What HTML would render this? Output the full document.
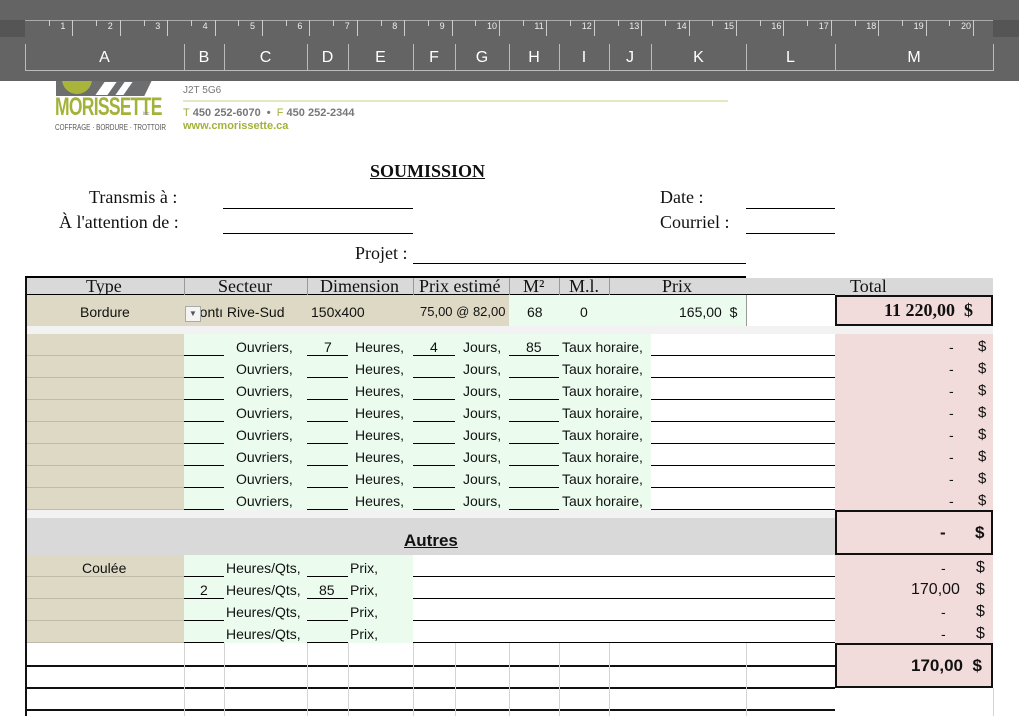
<!DOCTYPE html>
<html><head><meta charset="utf-8"><style>
*{margin:0;padding:0;box-sizing:border-box}
body{width:1019px;height:716px;overflow:hidden;background:#fff;position:relative;font-family:"Liberation Sans",sans-serif;color:#111}
.a{position:absolute}
.t{position:absolute;font-family:"Liberation Serif",serif;font-size:18px;white-space:nowrap}
.s{position:absolute;font-size:14px;white-space:nowrap;line-height:22px;padding-top:2px}
.ul{position:absolute;height:1px;background:#000}
.vl{position:absolute;width:1px;background:#d4d4d4}
</style></head><body>

<!-- logo -->
<div class="a" style="left:56px;top:80px;width:96px;height:16px;background:#6d6e70;clip-path:polygon(0 0,100% 0,92% 100%,0 100%)"></div>
<div class="a" style="left:62px;top:70px;width:30px;height:24px;border-radius:0 0 15px 15px;background:#a8b53a"></div>
<div class="a" style="left:100px;top:82px;width:12px;height:13px;background:#fff;transform:skewX(-35deg)"></div>
<div class="a" style="left:120px;top:82px;width:8px;height:13px;background:#fff;transform:skewX(-35deg)"></div>
<div class="a" style="left:55px;top:93px;font-size:25px;font-weight:bold;color:#a4b23a;letter-spacing:-1px;transform:scaleX(0.7);transform-origin:left;white-space:nowrap">MORISSETTE</div>
<div class="a" style="left:143px;top:111px;font-size:5px;color:#888">inc</div>
<div class="a" style="left:55px;top:122px;font-size:8.5px;color:#555;white-space:nowrap;transform:scaleX(0.75);transform-origin:left">COFFRAGE · BORDURE · TROTTOIR</div>
<div class="a" style="left:183px;top:85px;font-size:10px;color:#777">J2T 5G6</div>
<div class="a" style="left:183px;top:100px;width:545px;height:2px;background:#e3e8c4"></div>
<div class="a" style="left:183px;top:107px;font-size:11px;color:#777;font-weight:bold;white-space:nowrap"><span style="color:#a4b23a;font-weight:normal">T</span> 450 252-6070 &nbsp;•&nbsp; <span style="color:#a4b23a;font-weight:normal">F</span> 450 252-2344</div>
<div class="a" style="left:183px;top:120px;font-size:11px;color:#a4b23a;font-weight:bold">www.cmorissette.ca</div>

<!-- header bar -->
<div class="a" style="left:0;top:0;width:1019px;height:81px;background:#646464"></div>
<div class="a" style="left:0;top:20px;width:25px;height:17px;background:#555"></div>
<div class="a" style="left:993px;top:20px;width:26px;height:17px;background:#555"></div>
<div class="a" style="left:25px;top:20px;width:968px;height:1px;background:#aaa"></div>
<div class="a" style="left:25px;top:70px;width:968px;height:1px;background:#bbb"></div>
<div id="ruler"></div>
<div id="cols"></div>

<!-- title -->
<div class="t" style="left:370px;top:161px;font-weight:bold;text-decoration:underline;font-size:18px">SOUMISSION</div>
<div class="t" style="left:89px;top:187px">Transmis à :</div>
<div class="t" style="left:59px;top:212px">À l'attention de :</div>
<div class="t" style="left:660px;top:187px">Date :</div>
<div class="t" style="left:660px;top:212px">Courriel :</div>
<div class="t" style="left:355px;top:243px">Projet :</div>
<div class="ul" style="left:223px;top:208px;width:190px"></div>
<div class="ul" style="left:223px;top:233px;width:190px"></div>
<div class="ul" style="left:746px;top:208px;width:89px"></div>
<div class="ul" style="left:746px;top:233px;width:89px"></div>
<div class="ul" style="left:413px;top:263px;width:333px"></div>

<!-- table header -->
<div class="a" style="left:25px;top:278px;width:968px;height:17px;background:#d9d9d9"></div>
<div class="a" style="left:25px;top:276px;width:721px;height:2px;background:#000"></div>
<div class="t" style="left:86px;top:276px">Type</div>
<div class="t" style="left:218px;top:276px">Secteur</div>
<div class="t" style="left:320px;top:276px">Dimension</div>
<div class="t" style="left:419px;top:276px">Prix estimé</div>
<div class="t" style="left:523px;top:276px">M²</div>
<div class="t" style="left:569px;top:276px">M.l.</div>
<div class="t" style="left:662px;top:276px">Prix</div>
<div class="t" style="left:850px;top:276px">Total</div>
<div class="a" style="left:25px;top:294px;width:810px;height:1px;background:#000"></div>
<div class="vl" style="left:184px;top:278px;height:48px;background:#999"></div>
<div class="vl" style="left:307px;top:278px;height:48px;background:#999"></div>
<div class="vl" style="left:413px;top:278px;height:48px;background:#999"></div>
<div class="vl" style="left:509px;top:278px;height:48px;background:#999"></div>
<div class="vl" style="left:559px;top:278px;height:48px;background:#999"></div>
<div class="vl" style="left:609px;top:278px;height:48px;background:#999"></div>
<div class="vl" style="left:746px;top:295px;height:31px;background:#999"></div>

<!-- data row -->
<div class="a" style="left:25px;top:295px;width:484px;height:31px;background:#ddd9c4"></div>
<div class="a" style="left:509px;top:295px;width:237px;height:31px;background:#ebfcef"></div>
<div class="a" style="left:835px;top:295px;width:158px;height:31px;background:#f2dcdb;border:2px solid #111"></div>
<div class="s" style="left:80px;top:299px">Bordure</div>
<div class="s" style="left:188px;top:299px">Montı Rive-Sud</div>
<div class="a" style="left:185px;top:306px;width:16px;height:16px;background:#f4f4f4;border:1px solid #aaa;font-size:8px;text-align:center;line-height:14px;color:#555">▼</div>
<div class="s" style="left:311px;top:299px">150x400</div>
<div class="s" style="left:420px;top:299px;font-size:13px">75,00 @ 82,00</div>
<div class="s" style="left:527px;top:299px">68</div>
<div class="s" style="left:580px;top:299px">0</div>
<div class="s" style="left:679px;top:299px">165,00 &nbsp;$</div>
<div class="t" style="left:884px;top:300px;font-weight:bold;font-size:18px">11 220,00 &nbsp;$</div>
<div class="a" style="left:25px;top:326px;width:968px;height:8px;background:#f2f2f2"></div>

<div id="workers"></div>

<!-- Autres -->
<div class="a" style="left:25px;top:510px;width:810px;height:8px;background:#f2f2f2"></div>
<div class="a" style="left:25px;top:518px;width:810px;height:37px;background:#d9d9d9"></div>
<div class="a" style="left:835px;top:510px;width:158px;height:45px;background:#f2dcdb;border:2px solid #111"></div>
<div class="a" style="left:404px;top:531px;font-size:17px;font-weight:bold;text-decoration:underline">Autres</div>
<div class="a" style="left:940px;top:523px;font-size:17px;font-weight:bold">-</div>
<div class="a" style="left:975px;top:523px;font-size:17px;font-weight:bold">$</div>
<div id="autres"></div>

<div class="a" style="left:835px;top:643px;width:158px;height:45px;background:#f2dcdb;border:2px solid #111"></div>
<div class="a" style="left:911px;top:656px;font-size:17px;font-weight:bold">170,00 &nbsp;$</div>
<div class="a" style="left:25px;top:665px;width:810px;height:1.5px;background:#111"></div>
<div class="a" style="left:25px;top:687px;width:810px;height:1.5px;background:#111"></div>
<div class="a" style="left:25px;top:709px;width:810px;height:1.5px;background:#111"></div>
<div class="vl" style="left:184px;top:643px;height:73px"></div>
<div class="vl" style="left:224px;top:643px;height:73px"></div>
<div class="vl" style="left:307px;top:643px;height:73px"></div>
<div class="vl" style="left:348px;top:643px;height:73px"></div>
<div class="vl" style="left:413px;top:643px;height:73px"></div>
<div class="vl" style="left:455px;top:643px;height:73px"></div>
<div class="vl" style="left:509px;top:643px;height:73px"></div>
<div class="vl" style="left:559px;top:643px;height:73px"></div>
<div class="vl" style="left:609px;top:643px;height:73px"></div>
<div class="vl" style="left:746px;top:643px;height:73px"></div>
<div class="vl" style="left:993px;top:688px;height:28px"></div>
<div class="a" style="left:25px;top:278px;width:1.5px;height:438px;background:#111"></div>

<script>
var h='';
var cols=[[25,184,'A'],[184,224,'B'],[224,307,'C'],[307,348,'D'],[348,413,'E'],[413,455,'F'],[455,509,'G'],[509,559,'H'],[559,609,'I'],[609,651,'J'],[651,746,'K'],[746,835,'L'],[835,993,'M']];
cols.forEach(function(c){h+='<div class="a" style="left:'+c[0]+'px;top:44px;width:1px;height:27px;background:#bbb"></div><div class="a" style="left:'+c[0]+'px;top:49px;width:'+(c[1]-c[0])+'px;text-align:center;color:#fff;font-size:16px">'+c[2]+'</div>';});
h+='<div class="a" style="left:993px;top:44px;width:1px;height:27px;background:#bbb"></div>';
document.getElementById('cols').innerHTML=h;
h='';
for(var i=1;i<=20;i++){var x=25+i*47.4;h+='<div class="a" style="left:'+x+'px;top:20px;width:1px;height:16px;background:#ccc"></div><div class="a" style="left:'+(x-12)+'px;top:21px;color:#eee;font-size:9px">'+i+'</div>';
h+='<div class="a" style="left:'+(x-23.7)+'px;top:20px;width:1px;height:6px;background:#ccc"></div>';}
document.getElementById('ruler').innerHTML=h;
h='';
for(var r=0;r<8;r++){var y=334+r*22;
h+='<div class="a" style="left:25px;top:'+y+'px;width:159px;height:22px;background:#ddd9c4;border-bottom:1px solid #bfbba8"></div>';
h+='<div class="a" style="left:184px;top:'+y+'px;width:467px;height:22px;background:#ebfcef"></div>';
h+='<div class="a" style="left:835px;top:'+y+'px;width:158px;height:22px;background:#f2dcdb"></div>';
[[184,224],[307,348],[413,455],[509,559],[651,835]].forEach(function(u){h+='<div class="ul" style="left:'+u[0]+'px;top:'+(y+21)+'px;width:'+(u[1]-u[0])+'px"></div>';});
h+='<div class="s" style="left:236px;top:'+y+'px">Ouvriers,</div><div class="s" style="left:355px;top:'+y+'px">Heures,</div><div class="s" style="left:463px;top:'+y+'px">Jours,</div><div class="s" style="left:562px;top:'+y+'px">Taux horaire,</div>';
h+='<div class="s" style="left:949px;top:'+y+'px">-</div><div class="s" style="left:978px;top:'+y+'px;font-size:15px">$</div>';
if(r==0){h+='<div class="s" style="left:324px;top:'+y+'px">7</div><div class="s" style="left:430px;top:'+y+'px">4</div><div class="s" style="left:526px;top:'+y+'px">85</div>';}
}
document.getElementById('workers').innerHTML=h;
h='';
for(var r=0;r<4;r++){var y=555+r*22;
h+='<div class="a" style="left:25px;top:'+y+'px;width:159px;height:22px;background:#ddd9c4;border-bottom:1px solid #bfbba8"></div>';
h+='<div class="a" style="left:184px;top:'+y+'px;width:229px;height:22px;background:#ebfcef"></div>';
h+='<div class="a" style="left:835px;top:'+y+'px;width:158px;height:22px;background:#f2dcdb"></div>';
[[184,224],[307,348],[413,835]].forEach(function(u){h+='<div class="ul" style="left:'+u[0]+'px;top:'+(y+21)+'px;width:'+(u[1]-u[0])+'px"></div>';});
h+='<div class="s" style="left:226px;top:'+y+'px">Heures/Qts,</div><div class="s" style="left:350px;top:'+y+'px">Prix,</div>';
if(r==1){h+='<div class="s" style="left:200px;top:'+y+'px">2</div><div class="s" style="left:319px;top:'+y+'px">85</div><div class="s" style="left:911px;top:'+y+'px;font-size:16px">170,00</div>';}
else h+='<div class="s" style="left:941px;top:'+y+'px">-</div>';
h+='<div class="s" style="left:976px;top:'+y+'px;font-size:16px">$</div>';
}
h+='<div class="s" style="left:82px;top:555px">Coulée</div>';
document.getElementById('autres').innerHTML=h;
</script>
</body></html>
